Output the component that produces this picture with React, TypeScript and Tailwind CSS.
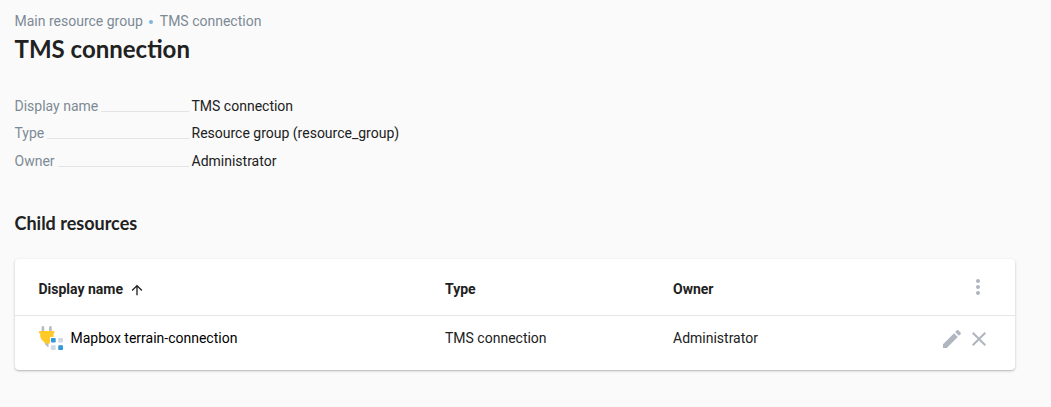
import React from 'react';

type Detail = { label: string; value: string };

const details: Detail[] = [
  { label: 'Display name', value: 'TMS connection' },
  { label: 'Type', value: 'Resource group (resource_group)' },
  { label: 'Owner', value: 'Administrator' },
];

function ConnectionIcon() {
  return (
    <svg width="24" height="24" viewBox="0 0 24 24" className="shrink-0">
      <path d="M3.900 0a1.300 1.300 0 0 1 1.300 1.300V6H2.600V1.300A1.300 1.300 0 0 1 3.900 0zM11.400 0a1.300 1.300 0 0 1 1.300 1.300V6h-2.600V1.300A1.300 1.300 0 0 1 11.400 0z" fill="#b5bdc2" />
      <path d="M5.500 16.500h4v5L6.500 19z" fill="#b5bdc2" />
      <path d="M.8 5h13.700a.8.8 0 0 1 .8.8v.9a.8.8 0 0 1-.8.8V11H11v6.500H6.200C5.500 15.500 1.200 14 1.200 9.500v-2A.9.9 0 0 1 0 6.600V5.800A.8.8 0 0 1 .8 5z" fill="#ffca28" />
      <rect x="11.900" y="12" width="4.800" height="4.500" rx=".8" fill="#3498db" />
      <rect x="19.200" y="12" width="4.800" height="4.500" rx=".8" fill="#cfd8e3" />
      <rect x="11.900" y="19.300" width="4.800" height="4.700" rx=".8" fill="#cfd8e3" />
      <rect x="19.200" y="19.300" width="4.800" height="4.700" rx=".8" fill="#3498db" />
    </svg>
  );
}

function Icon({ d, size, className }: { d: string; size: number; className?: string }) {
  return (
    <svg width={size} height={size} viewBox="0 0 24 24" fill="currentColor" className={className}>
      <path d={d} />
    </svg>
  );
}

export default function App() {
  return (
    <div className="min-h-screen bg-[#fafafa] pl-[14.5px] pr-9 pt-[11px] font-['Roboto',sans-serif] text-sm leading-5 text-[#212121]">
      <nav className="flex h-5 items-center text-[#7d8a96]">
        <span>Main resource group</span>
        <span className="ml-[6px] mr-[7px] mt-[2px] size-1 rounded-full bg-[#7fb5dc]" />
        <span>TMS connection</span>
      </nav>
      <h1 className="mt-[2px] font-['Lato',sans-serif] text-2xl font-bold leading-8">TMS connection</h1>

      <dl className="mt-[27px] flex flex-col">
        {details.map((item) => (
          <div key={item.label} className="flex h-[27.5px] items-center">
            <dt className="flex w-[174px] items-center text-[#7d8a96]">
              <span>{item.label}</span>
              <span className="ml-[3px] mt-[11px] h-px flex-1 bg-[#e4e4e4]" />
            </dt>
            <dd className="ml-[3px]">{item.value}</dd>
          </div>
        ))}
      </dl>

      <h2 className="mt-[36px] font-['Lato',sans-serif] text-lg font-bold leading-6">Child resources</h2>

      <section className="mt-[24px] h-[111px] w-[1000.5px] rounded bg-white shadow-[0_1px_3px_rgba(0,0,0,0.2),0_1px_1px_rgba(0,0,0,0.1)]">
        <div className="grid h-[57px] grid-cols-[406.500px_228px_1fr_48px] items-center border-b border-[#e6e6e6] pl-6 pt-[5px] font-bold">
          <div className="flex items-center gap-[6px]">
            Display name
            <Icon size={16} d="M4 12l1.410 1.410L11 7.830V20h2V7.830l5.580 5.590L20 12l-8-8-8 8z" className="mt-[1px]" />
          </div>
          <div>Type</div>
          <div>Owner</div>
          <Icon size={24} className="-mt-1 -ml-[1px] text-[#b0b6bf]" d="M12 8c1.100 0 2-.9 2-2s-.9-2-2-2-2 .9-2 2 .9 2 2 2zm0 2c-1.100 0-2 .9-2 2s.9 2 2 2 2-.9 2-2-.9-2-2-2zm0 6c-1.100 0-2 .9-2 2s.9 2 2 2 2-.9 2-2-.9-2-2-2z" />
        </div>
        <div className="grid h-[44px] grid-cols-[406.500px_228px_1fr_75px] items-center pl-6">
          <div className="flex items-center gap-2 text-black">
            <ConnectionIcon />
            Mapbox terrain-connection
          </div>
          <div>TMS connection</div>
          <div>Administrator</div>
          <div className="mt-[2px] flex gap-[3px] text-[#b0b6bf]">
            <Icon size={24} d="M3 17.250V21h3.750L17.810 9.940l-3.750-3.750L3 17.250zM20.710 7.040c.39-.39.39-1.020 0-1.410l-2.340-2.340c-.39-.39-1.020-.39-1.410 0l-1.830 1.830 3.750 3.750 1.830-1.830z" />
            <Icon size={24} d="M19 6.410L17.590 5 12 10.590 6.410 5 5 6.410 10.590 12 5 17.590 6.410 19 12 13.410 17.590 19 19 17.590 13.410 12z" />
          </div>
        </div>
      </section>
    </div>
  );
}
